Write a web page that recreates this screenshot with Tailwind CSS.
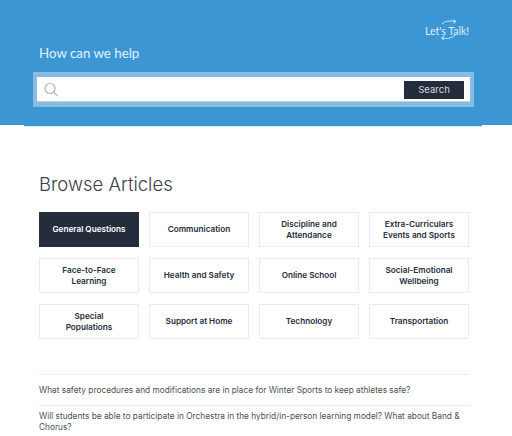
<html lang="en">
<head>
    <meta charset="UTF-8">
    <title>Help Center</title>
    <script src="https://cdn.jsdelivr.net/npm/@tailwindcss/browser@4"></script>
</head>
<body class="bg-white font-['Inter','Noto_Sans',sans-serif] overflow-hidden">
    <div class="h-[436px] overflow-hidden">
        <header class="h-[125px] bg-[#3c96d3] relative px-[33px] pt-[45px]">
            <div class="absolute left-[424px] top-[20px] w-[48px] h-[22px] text-[#dceefa]">
                <svg class="absolute left-[16px] top-[-2px]" width="18" height="24" viewBox="0 0 18 24" fill="none" stroke="currentColor" stroke-width="0.9">
                    <path d="M2 6 C5 3 9 2.5 15 3.5"/>
                    <path d="M13 1.5 L16 3.5 L13.5 5.5"/>
                    <path d="M15 17 C12 20.5 7 21 2 20"/>
                    <path d="M4.5 18 L1.5 20 L4 22"/>
                </svg>
                <span class="absolute left-[1px] top-[4px] font-['Lato',sans-serif] text-[10.5px] leading-[14px] whitespace-nowrap">Let's Talk!</span>
            </div>
            <h1 class="pl-[6px] font-['Lato',sans-serif] text-[13.3px] leading-[16px] font-normal text-[#e3f1fb]">How can we help</h1>
            <form class="mt-[11px] w-[441px] h-[35px] bg-[#87bde3] py-[5px] px-[4px] flex">
                <div class="flex-1 bg-white shadow-[inset_0_-1px_0_#c9ced4] flex items-center justify-between pl-[7px] pr-[6px]">
                    <svg width="15" height="15" viewBox="0 0 15 15" fill="none" stroke="#b5b5b5" stroke-width="1.2">
                        <circle cx="6" cy="6.5" r="5"/>
                        <path d="M9.7 10.2 L13.5 14"/>
                    </svg>
                    <button type="button" class="w-[60px] h-[18px] bg-[#252d3d] text-[#d5d8dc] text-[9.5px] leading-[18px] text-center">Search</button>
                </div>
            </form>
            <div class="absolute left-[24px] top-[125px] w-[458px] h-[1px] bg-[#3c96d3]"></div>
            <div class="absolute left-[24px] top-[126px] w-[458px] h-[1px] bg-[#d6e9f6]"></div>
        </header>

        <main class="px-[39px] pt-[48px]">
            <h2 class="text-[18.5px] leading-[22px] font-light text-[#3d4147]">Browse Articles</h2>
            <div class="mt-[17px] w-[430px] grid grid-cols-4 gap-x-[10px] gap-y-[11px]">
                <a class="h-[35px] px-1 bg-[#252d3d] text-white flex items-center justify-center text-center text-[8.2px] leading-[11px] font-semibold">General Questions</a>
                <a class="h-[35px] px-1 border border-[#e8ecf0] text-[#252d3d] flex items-center justify-center text-center text-[8.2px] leading-[11px] font-semibold">Communication</a>
                <a class="h-[35px] px-1 border border-[#e8ecf0] text-[#252d3d] flex items-center justify-center text-center text-[8.2px] leading-[11px] font-semibold">Discipline and<br>Attendance</a>
                <a class="h-[35px] px-1 border border-[#e8ecf0] text-[#252d3d] flex items-center justify-center text-center text-[8.2px] leading-[11px] font-semibold">Extra-Curriculars<br>Events and Sports</a>
                <a class="h-[35px] px-1 border border-[#e8ecf0] text-[#252d3d] flex items-center justify-center text-center text-[8.2px] leading-[11px] font-semibold">Face-to-Face<br>Learning</a>
                <a class="h-[35px] px-1 border border-[#e8ecf0] text-[#252d3d] flex items-center justify-center text-center text-[8.2px] leading-[11px] font-semibold">Health and Safety</a>
                <a class="h-[35px] px-1 border border-[#e8ecf0] text-[#252d3d] flex items-center justify-center text-center text-[8.2px] leading-[11px] font-semibold">Online School</a>
                <a class="h-[35px] px-1 border border-[#e8ecf0] text-[#252d3d] flex items-center justify-center text-center text-[8.2px] leading-[11px] font-semibold">Social-Emotional<br>Wellbeing</a>
                <a class="h-[35px] px-1 border border-[#e8ecf0] text-[#252d3d] flex items-center justify-center text-center text-[8.2px] leading-[11px] font-semibold">Special<br>Populations</a>
                <a class="h-[35px] px-1 border border-[#e8ecf0] text-[#252d3d] flex items-center justify-center text-center text-[8.2px] leading-[11px] font-semibold">Support at Home</a>
                <a class="h-[35px] px-1 border border-[#e8ecf0] text-[#252d3d] flex items-center justify-center text-center text-[8.2px] leading-[11px] font-semibold">Technology</a>
                <a class="h-[35px] px-1 border border-[#e8ecf0] text-[#252d3d] flex items-center justify-center text-center text-[8.2px] leading-[11px] font-semibold">Transportation</a>
            </div>
            <ul class="mt-[35px] w-[431px] text-[8.3px] leading-[11px] text-[#4b4f55]">
                <li class="border-t border-[#e8ecf0] pt-[10px] pb-[9px]">What safety procedures and modifications are in place for Winter Sports to keep athletes safe?</li>
                <li class="border-t border-[#e8ecf0] pt-[5px]">Will students be able to participate in Orchestra in the hybrid/in-person learning model? What about Band &amp; Chorus?</li>
            </ul>
        </main>
    </div>
</body>
</html>
